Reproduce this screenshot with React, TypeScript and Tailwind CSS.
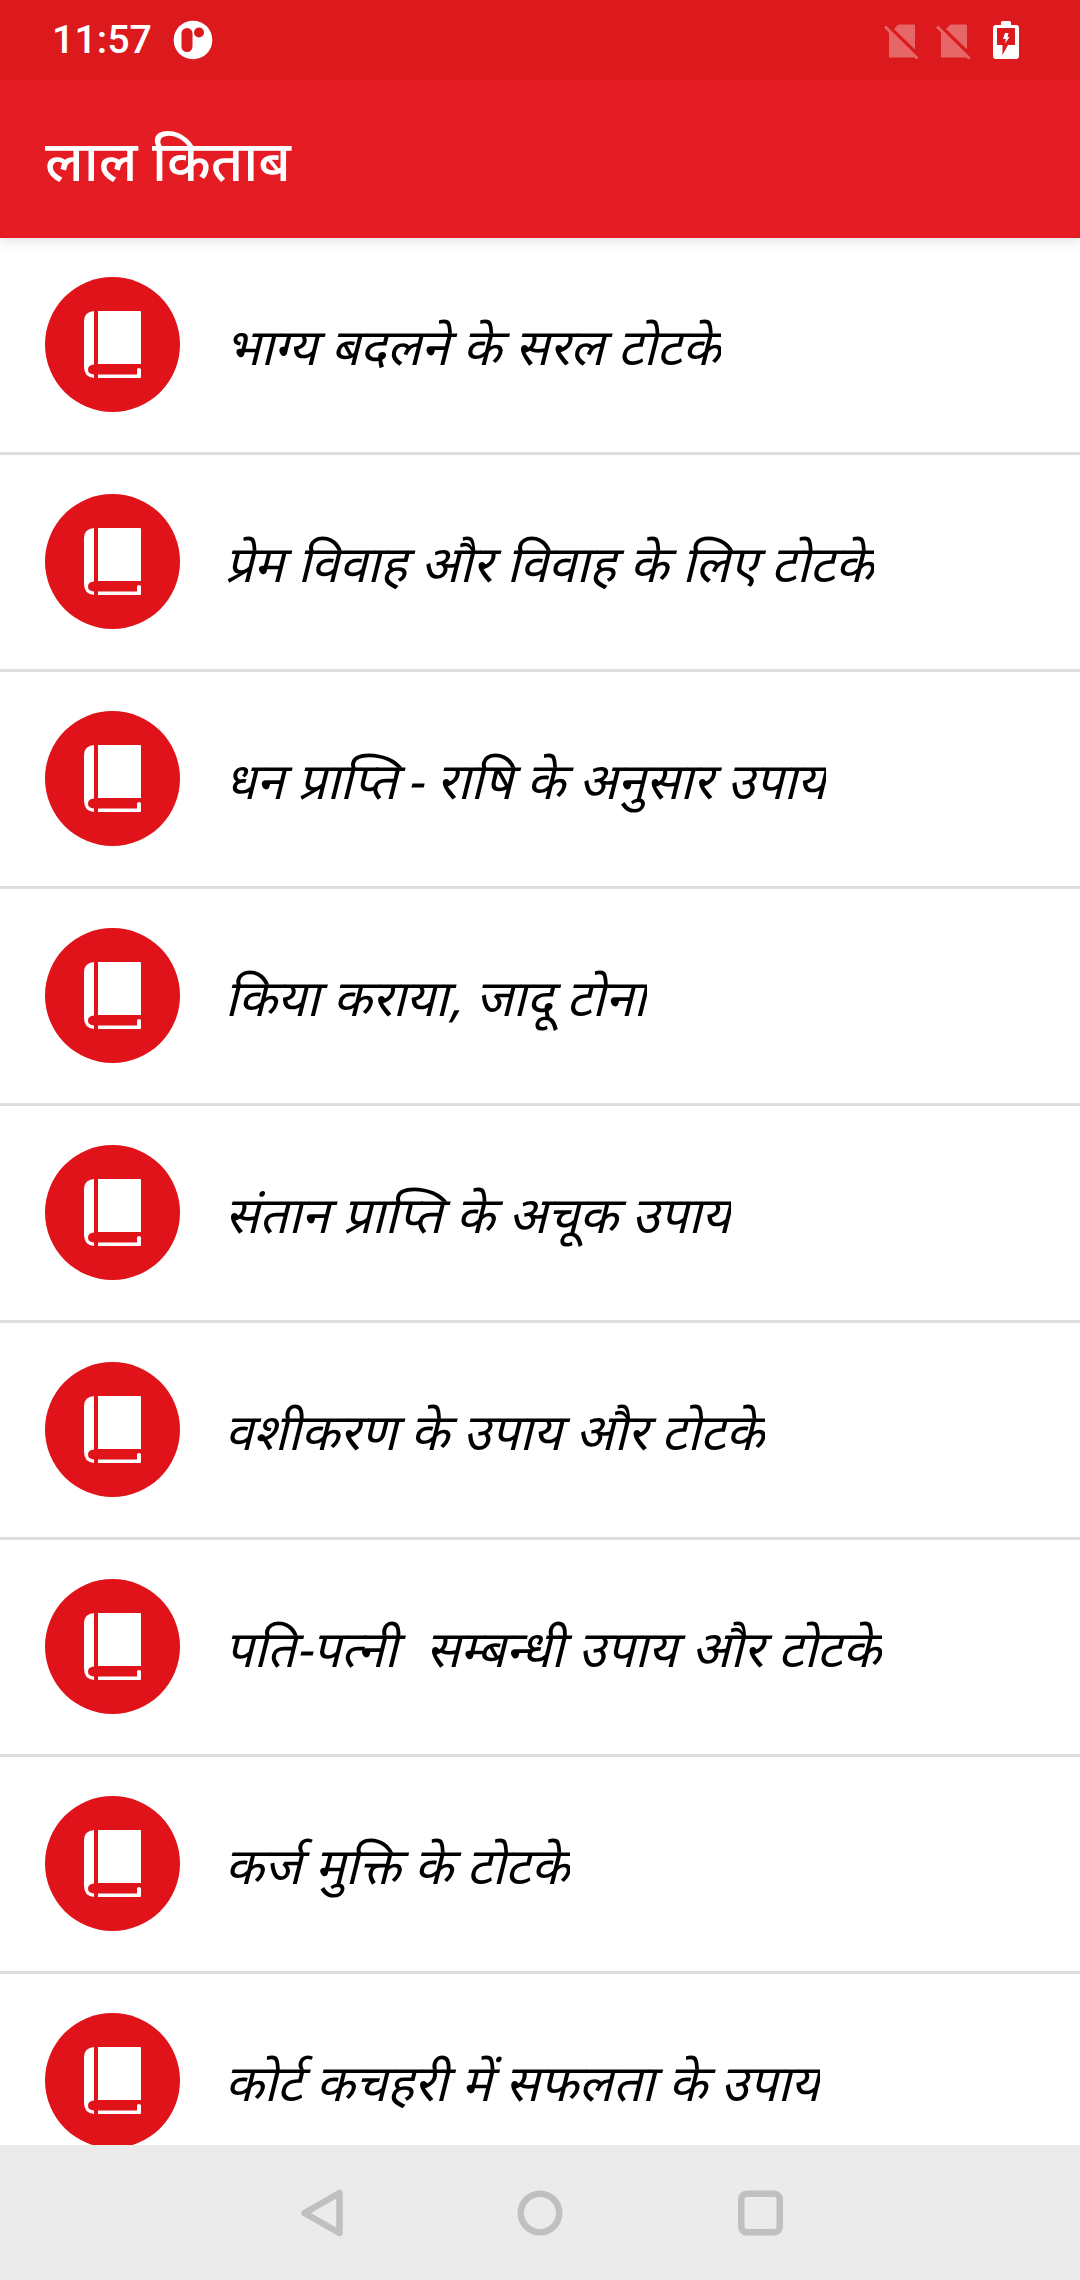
import type { ReactNode } from 'react';

type Item = { title: ReactNode; lang?: string; wide?: boolean };

const items: Item[] = [
  { title: 'भाग्य बदलने के सरल टोटके' },
  { title: 'प्रेम विवाह और विवाह के लिए टोटके' },
  { title: <>धन प्राप्ति<span className="-ml-1"> - राषि के अनुसार उपाय</span></> },
  { title: 'किया कराया, जादू टोना' },
  { title: 'संतान प्राप्ति के अचूक उपाय' },
  { title: 'वशीकरण के उपाय और टोटके' },
  { title: 'पति-पत्नी  सम्बन्धी उपाय और टोटके', wide: true },
  // Nepali shaping gives the stacked form of the kta conjunct
  { title: 'कर्ज मुक्ति के टोटके', lang: 'ne' },
  { title: 'कोर्ट कचहरी में सफलता के उपाय' },
];

function NoSim() {
  return (
    <svg className="mt-[3px] h-9 w-9 opacity-33" viewBox="0 0 36 36" fill="#fff">
      <path d="M10 5 14.500 0.500H30Q31 0.500 31 1.500V25.500Z" />
      <path d="M0 3.500 2 1.500 34.500 33.500 32.500 35.500 30.500 33.500H5V8.500Z" />
    </svg>
  );
}

function Book() {
  return (
    <svg className="h-[135px] w-[135px] shrink-0" viewBox="0 0 135 135">
      <circle cx="67.500" cy="67.500" r="67.500" fill="#df1319" />
      <g fill="#fff">
        <path d="M53 34H95Q96 34 96 35V87H53Z" />
        <path d="M49 34V87.500Q43 88 43 92.500 43 97 49 97.500V101Q39 100 39 90V44Q39 35 49 34Z" />
        <path d="M53 97.500H92V92.500Q92 91 94 91 96 91 96 92.500V100Q96 101 95 101H53Z" />
      </g>
    </svg>
  );
}

export default function App() {
  return (
    <div className="flex h-[2280px] w-[1080px] flex-col overflow-hidden bg-white font-['Noto_Sans',sans-serif]">
      <div className="relative z-20 flex h-20 shrink-0 items-center bg-[#dc1a1d] pl-[52px] text-white">
        <span className="font-[Roboto,sans-serif] text-[39.400px] leading-none font-medium">11:57</span>
        <svg className="ml-[21px] h-10 w-10" viewBox="0 0 40 40">
          <circle cx="20" cy="20" r="19.300" fill="#fff" />
          <rect x="8.500" y="8" width="11" height="24" rx="5.500" fill="#dc1a1d" />
          <circle cx="26" cy="12.500" r="5" fill="#dc1a1d" />
        </svg>
        <div className="ml-auto flex items-center pr-[61px]">
          <NoSim />
          <div className="w-4" />
          <NoSim />
          <svg className="ml-[21px] h-[38px] w-[26px]" viewBox="0 0 26 38">
            <path d="M3 4H8V1.500Q8 0 9.500 0H16.500Q18 0 18 1.500V4H23Q26 4 26 7V35Q26 38 23 38H3Q0 38 0 35V7Q0 4 3 4Z" fill="#fff" />
            <path d="M4 7H22V24H15L9.500 34V24H4Z" fill="#dc1a1d" />
            <path d="M12 12H15.500L14.500 16H16.500L12 22.500 13 18H10Z" fill="#fff" />
          </svg>
        </div>
      </div>
      <header className="relative z-10 flex h-[158px] shrink-0 items-center bg-[#e61c24] pt-0.5 pl-[45px] shadow-[0_3px_12px_rgba(0,0,0,0.12)]">
        <h1 className="text-[55.700px] leading-none font-medium text-white">लाल किताब</h1>
      </header>
      <main className="min-h-0 flex-1 overflow-hidden">
        {items.map((item, i) => (
          <div key={i} className="flex h-[217px] items-center border-b-3 border-[#dedede] pb-0.5 pl-[45px]">
            <Book />
            <div className="mt-1 ml-[45px] overflow-hidden text-[50.700px] leading-[80px] whitespace-pre text-black">
              <span lang={item.lang} className={`block origin-[0_58px] -skew-x-14 ${item.wide ? '[word-spacing:1px]' : '[word-spacing:0.300px]'}`}>
                {item.title}
              </span>
            </div>
          </div>
        ))}
      </main>
      <nav className="flex h-[135px] shrink-0 items-center justify-center bg-[#ebebeb]">
        <svg className="h-[50px] w-[490px]" viewBox="0 0 490 50" fill="none" stroke="#c0c0c0" strokeWidth="6.500" strokeLinejoin="round">
          <path d="M44.500 5V45L9.500 25Z" />
          <circle cx="245" cy="25" r="19.250" />
          <rect x="446.250" y="5.750" width="38.500" height="38.500" rx="5.500" />
        </svg>
      </nav>
    </div>
  );
}
